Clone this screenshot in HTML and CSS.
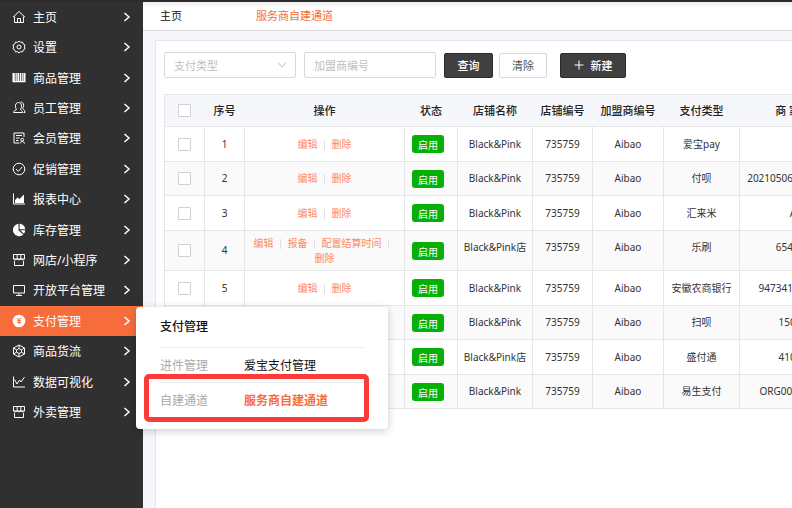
FILE: index.html
```html
<!DOCTYPE html>
<html lang="zh-CN">
<head>
<meta charset="utf-8">
<title>服务商自建通道</title>
<link rel="stylesheet" href="styles.css">
</head>
<body>
<div class="app">
  <aside class="sidebar">
    <ul class="menu">
      <li><a href="#"><svg class="icon" viewBox="0 0 14 14"><path d="M1 7.2 7 1.5l6 5.700M2.500 6.500v6h9v-6M5.500 12.500v-4h3v4"/></svg><span>主页</span><svg class="arrow" viewBox="0 0 8 10"><path d="m1.500 1 4.500 4-4.500 4"/></svg></a></li>
      <li><a href="#"><svg class="icon" viewBox="0 0 14 14"><path d="m7 1 1.500 1.300 2-.2.700 1.800 1.700 1-.4 2.100.4 2-1.700 1.100-.7 1.800-2-.2L7 13l-1.500-1.300-2 .2-.700-1.800-1.700-1.100.4-2-.4-2.100 1.700-1 .7-1.800 2 .2z"/><circle cx="7" cy="7" r="2"/></svg><span>设置</span><svg class="arrow" viewBox="0 0 8 10"><path d="m1.500 1 4.500 4-4.500 4"/></svg></a></li>
      <li><a href="#"><svg class="icon" viewBox="0 0 14 14"><path class="solid" d="M.500 2h2.300v8.500H.5zM3.500 2h1.300v8.500H3.500zM5.400 2h1.900v8.500H5.400zM8 2h1.200v8.500H8zM9.800 2h1v8.500h-1zM11.400 2h2.100v8.500h-2.100zM.5 10h13v1.200H.5z"/></svg><span>商品管理</span><svg class="arrow" viewBox="0 0 8 10"><path d="m1.500 1 4.500 4-4.500 4"/></svg></a></li>
      <li><a href="#"><svg class="icon" viewBox="0 0 14 14"><path d="M4.500 8.200C2.600 6 3.200 1.500 6.500 1.500s3.900 4.500 2 6.700c.2 1.300 2 1.300 2 3.300h-9c0-2 2.600-2 3-3.300M8.500 1c3.200-.3 4 3.800 2.200 6.200.4 1.500 2.300 1.600 2.300 4.300h-1.500"/></svg><span>员工管理</span><svg class="arrow" viewBox="0 0 8 10"><path d="m1.500 1 4.500 4-4.500 4"/></svg></a></li>
      <li><a href="#"><svg class="icon" viewBox="0 0 14 14"><path d="M7 12H2V2h10v4M4 4.500h6M4 7h3.500M4 9.500h2.500M8 12.500c0-2.500 4.500-2.500 4.500 0"/><circle cx="10.200" cy="8.700" r="1.400"/></svg><span>会员管理</span><svg class="arrow" viewBox="0 0 8 10"><path d="m1.500 1 4.500 4-4.500 4"/></svg></a></li>
      <li><a href="#"><svg class="icon" viewBox="0 0 14 14"><circle cx="7" cy="7" r="5.800"/><path d="m4 7 2.300 2.300L10.200 5"/></svg><span>促销管理</span><svg class="arrow" viewBox="0 0 8 10"><path d="m1.500 1 4.500 4-4.500 4"/></svg></a></li>
      <li><a href="#"><svg class="icon" viewBox="0 0 14 14"><path d="M1.500 1.500v10.500H13"/><path class="solid" d="M3 11V8l2.500-2.500L7.500 7l4.500-4.500V11z"/></svg><span>报表中心</span><svg class="arrow" viewBox="0 0 8 10"><path d="m1.500 1 4.500 4-4.500 4"/></svg></a></li>
      <li><a href="#"><svg class="icon" viewBox="0 0 14 14"><path class="solid" d="M6.500.700v6.500l4.800 4.600A6.300 6.300 0 1 1 6.500.700M7.600.700a6.200 6.200 0 0 1 5.600 5.600H7.600zM8.400 7.300h4.900a6 6 0 0 1-1.500 3.500z"/></svg><span>库存管理</span><svg class="arrow" viewBox="0 0 8 10"><path d="m1.500 1 4.500 4-4.500 4"/></svg></a></li>
      <li><a href="#"><svg class="icon" viewBox="0 0 14 14"><path d="M1.500 1.500h11v4.500h-11zM5.200 1.500V6M8.800 1.500V6M2.500 8v4.500h9V8M1.500 6l1.500 1 2.200-1L7 7l1.800-1L11 7l1.500-1"/></svg><span>网店/小程序</span><svg class="arrow" viewBox="0 0 8 10"><path d="m1.500 1 4.500 4-4.500 4"/></svg></a></li>
      <li><a href="#"><svg class="icon" viewBox="0 0 14 14"><path d="M1.500 2.500h11v7.500h-11zM7 10v2.500M4 12.500h6"/></svg><span>开放平台管理</span><svg class="arrow" viewBox="0 0 8 10"><path d="m1.500 1 4.500 4-4.500 4"/></svg></a></li>
      <li class="active"><a href="#"><svg class="icon" viewBox="0 0 14 14"><circle class="solid" cx="7" cy="7" r="6.300"/><path class="yen" d="M5 3.800 7 6.300l2-2.500M7 6.300v4M5 6.700h4M5 8.500h4"/></svg><span>支付管理</span><svg class="arrow" viewBox="0 0 8 10"><path d="m1.500 1 4.500 4-4.500 4"/></svg></a></li>
      <li><a href="#"><svg class="icon" viewBox="0 0 14 14"><path d="m7 1 5.500 3v6L7 13l-5.500-3V4zM1.500 4l3.200 2M12.500 4 9.300 6M1.500 10l3.200-2M12.500 10 9.300 8M7 1v3.500M7 9.500V13M7 4.500 9.500 6v2.200L7 9.500 4.500 8.200V6z"/></svg><span>商品货流</span><svg class="arrow" viewBox="0 0 8 10"><path d="m1.500 1 4.500 4-4.500 4"/></svg></a></li>
      <li><a href="#"><svg class="icon" viewBox="0 0 14 14"><path d="M1.500 1.500v10.500H13M2.500 4.500 5 9l2.500-4 1.500 2L12.500 2"/></svg><span>数据可视化</span><svg class="arrow" viewBox="0 0 8 10"><path d="m1.500 1 4.500 4-4.500 4"/></svg></a></li>
      <li><a href="#"><svg class="icon" viewBox="0 0 14 14"><path d="M1.500 1.500h11v4.500h-11zM5.200 1.500V6M8.800 1.500V6M2.500 8v4.500h9V8M1.500 6l1.500 1 2.200-1L7 7l1.800-1L11 7l1.500-1"/></svg><span>外卖管理</span><svg class="arrow" viewBox="0 0 8 10"><path d="m1.500 1 4.500 4-4.500 4"/></svg></a></li>
    </ul>
  </aside>
  <main class="main">
    <nav class="tabs">
      <a href="#">主页</a>
      <a href="#" class="current">服务商自建通道</a>
    </nav>
    <section class="card">
      <form class="filters">
        <div class="picker">
          <select aria-label="支付类型"><option>支付类型</option></select>
          <svg viewBox="0 0 10 6"><path d="m1 .5 4 4.500 4-4.500"/></svg>
        </div>
        <input class="field" type="text" placeholder="加盟商编号" aria-label="加盟商编号">
        <button type="button" class="btn dark">查询</button>
        <button type="button" class="btn plain">清除</button>
        <button type="button" class="btn dark create"><svg viewBox="0 0 10 10"><path d="M5 .5v9M.5 5h9"/></svg>新建</button>
      </form>
      <table class="grid">
        <colgroup><col class="c-check"><col class="c-index"><col class="c-ops"><col class="c-state"><col class="c-shop"><col class="c-code"><col class="c-owner"><col class="c-type"><col class="c-merchant"></colgroup>
        <thead>
          <tr><th><input type="checkbox" aria-label="全选"></th><th>序号</th><th>操作</th><th>状态</th><th>店铺名称</th><th>店铺编号</th><th>加盟商编号</th><th>支付类型</th><th>商 家 编 号</th></tr>
        </thead>
        <tbody>
          <tr><td><input type="checkbox" aria-label="1"></td><td>1</td><td class="ops"><a href="#">编辑</a><a href="#">删除</a></td><td><span class="tag">启用</span></td><td>Black&amp;Pink</td><td>735759</td><td>Aibao</td><td>爱宝pay</td><td></td></tr>
          <tr><td><input type="checkbox" aria-label="2"></td><td>2</td><td class="ops"><a href="#">编辑</a><a href="#">删除</a></td><td><span class="tag">启用</span></td><td>Black&amp;Pink</td><td>735759</td><td>Aibao</td><td>付呗</td><td>2021050620210506202</td></tr>
          <tr><td><input type="checkbox" aria-label="3"></td><td>3</td><td class="ops"><a href="#">编辑</a><a href="#">删除</a></td><td><span class="tag">启用</span></td><td>Black&amp;Pink</td><td>735759</td><td>Aibao</td><td>汇来米</td><td>A001</td></tr>
          <tr class="tall"><td><input type="checkbox" aria-label="4"></td><td>4</td><td class="ops"><a href="#">编辑</a><a href="#">报备</a><a href="#">配置结算时间</a><a href="#">删除</a></td><td><span class="tag">启用</span></td><td>Black&amp;Pink店</td><td>735759</td><td>Aibao</td><td>乐刷</td><td>654200001</td></tr>
          <tr><td><input type="checkbox" aria-label="5"></td><td>5</td><td class="ops"><a href="#">编辑</a><a href="#">删除</a></td><td><span class="tag">启用</span></td><td>Black&amp;Pink</td><td>735759</td><td>Aibao</td><td>安徽农商银行</td><td>947341200000001</td></tr>
          <tr><td><input type="checkbox" aria-label="6"></td><td>6</td><td class="ops"><a href="#">编辑</a><a href="#">删除</a></td><td><span class="tag">启用</span></td><td>Black&amp;Pink</td><td>735759</td><td>Aibao</td><td>扫呗</td><td>15000001</td></tr>
          <tr><td><input type="checkbox" aria-label="7"></td><td>7</td><td class="ops"><a href="#">编辑</a><a href="#">删除</a></td><td><span class="tag">启用</span></td><td>Black&amp;Pink店</td><td>735759</td><td>Aibao</td><td>盛付通</td><td>41000001</td></tr>
          <tr><td><input type="checkbox" aria-label="8"></td><td>8</td><td class="ops"><a href="#">编辑</a><a href="#">删除</a></td><td><span class="tag">启用</span></td><td>Black&amp;Pink</td><td>735759</td><td>Aibao</td><td>易生支付</td><td>ORG00000000001</td></tr>
        </tbody>
      </table>
    </section>
  </main>
  <div class="flyout">
    <h2>支付管理</h2>
    <dl>
      <div><dt>进件管理</dt><dd><a href="#">爱宝支付管理</a></dd></div>
      <div class="marked"><dt>自建通道</dt><dd><a href="#" class="current">服务商自建通道</a></dd></div>
    </dl>
  </div>
</div>
</body>
</html>
```
FILE: styles.css
```css
* { box-sizing: border-box; }
body {
  margin: 0;
  overflow: hidden;
  background: #f5f6fa;
  color: #222;
  font-family: "Noto Sans", "Noto Sans CJK SC", sans-serif;
  font-size: 12px;
}
a { color: inherit; text-decoration: none; }
svg { fill: none; stroke: currentColor; }
.app {
  position: relative;
  display: flex;
  min-height: 100vh;
  border-top: 2px solid #2b2b2b;
}

.sidebar { flex: 0 0 143px; background: #303030; color: #fff; }
.menu { margin: 0; padding: 0; list-style: none; }
.menu li:nth-child(5n+2), .menu li:nth-child(5n) { margin-bottom: 1px; }
.menu a { display: flex; align-items: center; height: 30px; padding: 0 12px; line-height: 18px; }
.menu span { padding-top: 2px; }
.menu .icon { width: 14px; height: 14px; margin-right: 7px; }
.menu .arrow { width: 8px; height: 10px; margin-left: auto; stroke-width: 1.500; }
.menu .solid { fill: currentColor; stroke: none; }
.menu .yen { stroke: #f66d3b; }
.menu .active { background: #f66d3b; }

.main { flex: 1; min-width: 0; display: flex; flex-direction: column; }
.tabs {
  display: flex;
  gap: 74px;
  height: 29px;
  padding: 0 17px;
  border-bottom: 1px solid #d9d9d9;
  background: linear-gradient(#eee, #fff 6px);
  color: #111;
  font-size: 11px;
  line-height: 28px;
}
.current { color: #f66d3b; }
.card {
  flex: 1;
  margin: 9px 0 0 12px;
  padding: 11px 0 0 8px;
  border: solid #e6e6e6;
  border-width: 1px 0 0 1px;
  background: #fff;
  overflow: hidden;
}

.filters { display: flex; align-items: center; margin-bottom: 16px; }
.picker { position: relative; width: 132px; margin-right: 8px; }
.picker select, .field {
  width: 132px;
  height: 26px;
  padding: 0 9px;
  border: 1px solid #d9d9d9;
  border-radius: 2px;
  background: #fff;
  color: #bfbfbf;
  font: 11px "Noto Sans", "Noto Sans CJK SC", sans-serif;
}
.picker select { display: block; appearance: none; }
.picker svg { position: absolute; top: 10px; right: 9px; width: 10px; height: 6px; color: #bfbfbf; }
.field { margin-right: 8px; }
.field::placeholder { color: #bfbfbf; opacity: 1; }
.btn {
  display: flex;
  align-items: center;
  justify-content: center;
  height: 25px;
  padding: 0 12px;
  border: 1px solid #2b2b2b;
  border-radius: 2px;
  font: 11px "Noto Sans", "Noto Sans CJK SC", sans-serif;
}
.dark { width: 49px; background: #404040; color: #fff; font-weight: 500; }
.plain { width: 48px; margin: 0 13px 0 6px; border-color: #d9d9d9; background: #fff; color: #555; }
.create { width: 66px; gap: 7px; }
.create svg { width: 10px; height: 10px; }

.grid {
  width: 699px;
  border-collapse: collapse;
  table-layout: fixed;
  color: #333;
  font-size: 10px;
  line-height: 15px;
  text-align: center;
}
.c-check, .c-index { width: 40px; }
.c-ops { width: 160px; }
.c-state { width: 53px; }
.c-shop { width: 75px; }
.c-code { width: 60px; }
.c-owner { width: 71px; }
.c-type { width: 76px; }
.c-merchant { width: 124px; }
.grid th { height: 32px; padding: 0; background: #f5f7fa; border: solid #e6e6e6; border-width: 1px 0; color: #222; font-size: 11px; font-weight: 500; }
.grid th:first-child { border-left-width: 1px; }
.grid td { height: 35px; padding: 0; border: 1px solid #e6e6e6; white-space: nowrap; }
.grid tr:nth-child(even) td { height: 34px; background: #fafafa; }
.grid tbody tr.tall td { height: 40px; }
.grid .tall td:nth-child(n+5) { padding-bottom: 6px; }
.grid input {
  display: block;
  width: 13px;
  height: 13px;
  margin: 0 auto;
  appearance: none;
  border: 1px solid #d0d0d0;
  border-radius: 1px;
  background: #fff;
}
.grid .ops { padding: 0 6px; color: #ff8a5c; white-space: normal; }
.ops a { display: inline-block; }
.ops a:not(:last-child)::after {
  content: "";
  display: inline-block;
  width: 1px;
  height: 10px;
  margin: 0 7px 0 6px;
  background: #e0e0e0;
  vertical-align: middle;
}
.tag {
  display: block;
  width: 32px;
  height: 18px;
  margin-left: 7px;
  padding-top: 1px;
  border-radius: 3px;
  background: #06b006;
  color: #fff;
  line-height: 18px;
}

.flyout {
  position: absolute;
  top: 305px;
  left: 136px;
  width: 252px;
  padding: 10px 24px 12px;
  border-radius: 4px;
  background: #fff;
  box-shadow: 0 2px 8px rgba(0, 0, 0, 0.200);
  color: #111;
  line-height: 20px;
}
.flyout h2 { margin: 0; padding-bottom: 10px; border-bottom: 1px solid #eee; font-size: 12px; font-weight: 500; }
.flyout dl { margin: 0; }
.flyout dl div { display: flex; padding: 8px 0 6px; }
.flyout dt { width: 84px; color: #aaa; }
.flyout dd { margin: 0; }
.flyout dd .current { font-weight: 700; }
.flyout .marked { position: relative; border-top: 1px solid #eee; }
.flyout .marked::after {
  content: "";
  position: absolute;
  inset: -9px -5px -5px -16px;
  border: 5px solid #fb3a3a;
  border-radius: 5px;
}
```
